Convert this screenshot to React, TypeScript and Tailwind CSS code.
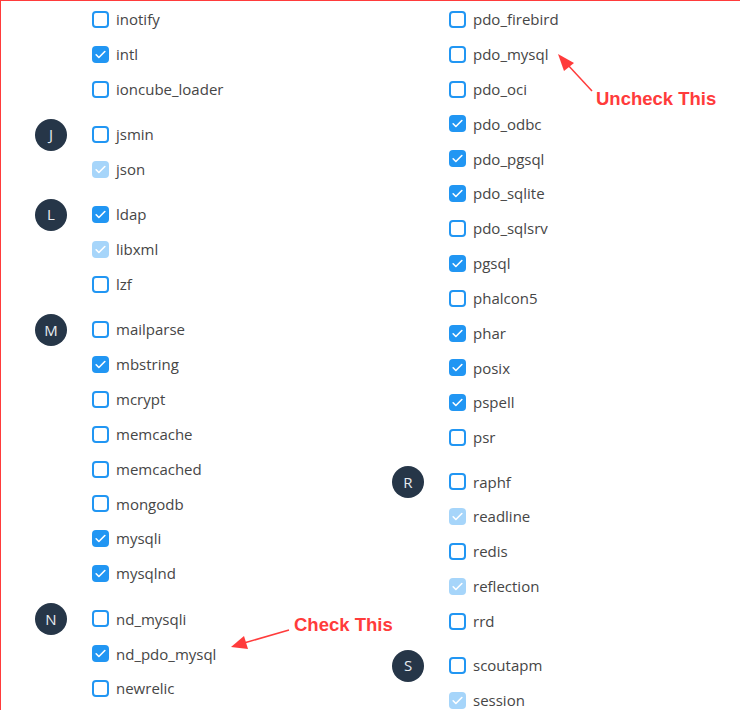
import React from "react";

type Ext = { name: string; state?: "on" | "off" | "locked" };
type Group = { letter?: string; items: Ext[] };

const left: Group[] = [
  {
    items: [
      { name: "inotify" },
      { name: "intl", state: "on" },
      { name: "ioncube_loader" },
    ],
  },
  { letter: "J", items: [{ name: "jsmin" }, { name: "json", state: "locked" }] },
  {
    letter: "L",
    items: [{ name: "ldap", state: "on" }, { name: "libxml", state: "locked" }, { name: "lzf" }],
  },
  {
    letter: "M",
    items: [
      { name: "mailparse" },
      { name: "mbstring", state: "on" },
      { name: "mcrypt" },
      { name: "memcache" },
      { name: "memcached" },
      { name: "mongodb" },
      { name: "mysqli", state: "on" },
      { name: "mysqlnd", state: "on" },
    ],
  },
  {
    letter: "N",
    items: [{ name: "nd_mysqli" }, { name: "nd_pdo_mysql", state: "on" }, { name: "newrelic" }],
  },
];

const right: Group[] = [
  {
    items: [
      { name: "pdo_firebird" },
      { name: "pdo_mysql" },
      { name: "pdo_oci" },
      { name: "pdo_odbc", state: "on" },
      { name: "pdo_pgsql", state: "on" },
      { name: "pdo_sqlite", state: "on" },
      { name: "pdo_sqlsrv" },
      { name: "pgsql", state: "on" },
      { name: "phalcon5" },
      { name: "phar", state: "on" },
      { name: "posix", state: "on" },
      { name: "pspell", state: "on" },
      { name: "psr" },
    ],
  },
  {
    letter: "R",
    items: [
      { name: "raphf" },
      { name: "readline", state: "locked" },
      { name: "redis" },
      { name: "reflection", state: "locked" },
      { name: "rrd" },
    ],
  },
  { letter: "S", items: [{ name: "scoutapm" }, { name: "session", state: "locked" }] },
];

function Box({ state = "off" }: { state?: Ext["state"] }) {
  if (state === "off") {
    return <span className="block w-[17px] h-[17px] rounded-[4px] border-2 border-[#2196f3] bg-white" />;
  }
  return (
    <span
      className={`flex items-center justify-center w-[17px] h-[17px] rounded-[4px] ${
        state === "on" ? "bg-[#2196f3]" : "bg-[#a6d5fa]"
      }`}
    >
      <svg width="13" height="13" viewBox="0 0 24 24" fill="none" stroke="white" strokeWidth="3" strokeLinecap="round" strokeLinejoin="round">
        <path d="M4 12.5l5 5L20 6.5" />
      </svg>
    </span>
  );
}

function Column({ groups, className }: { groups: Group[]; className: string }) {
  return (
    <div className={`shrink-0 flex flex-col ${className}`}>
      {groups.map((g, i) => (
        <div key={i} className="flex">
          <div className="w-[57px] shrink-0 pt-[1.5px]">
            {g.letter && (
              <div className="w-[32px] h-[32px] rounded-full bg-[#263648] text-[#e8ecf0] text-[15px] flex items-center justify-center">
                {g.letter}
              </div>
            )}
          </div>
          <ul className="flex flex-col">
            {g.items.map((it) => (
              <li key={it.name} className="h-[34.85px] flex items-center gap-[7px]">
                <Box state={it.state} />
                <span className="text-[15px] text-[#464646]">{it.name}</span>
              </li>
            ))}
          </ul>
        </div>
      ))}
    </div>
  );
}

export default function App() {
  return (
    <div
      className="relative w-[740px] h-[710px] overflow-hidden bg-white border-l border-t border-[#ff3b3b]"
      style={{ fontFamily: '"Open Sans", "Noto Sans", sans-serif' }}
    >
      <div className="flex pl-[34px] pt-[1px]">
        <Column groups={left} className="w-[357px] gap-[10.5px]" />
        <Column groups={right} className="w-[340px] gap-[9.5px]" />
      </div>

      {/* annotation arrows */}
      <svg className="absolute left-0 top-0 pointer-events-none" width="740" height="710">
        <line x1="591" y1="90" x2="566" y2="63" stroke="#ff3b3b" strokeWidth="1.5" />
        <polygon points="557,53 573,62 563,70" fill="#ff3b3b" />
        <line x1="288" y1="629" x2="243" y2="642" stroke="#ff3b3b" strokeWidth="1.5" />
        <polygon points="230,646 243,635 247,648" fill="#ff3b3b" />
      </svg>
      <div
        className="absolute left-[595px] top-[86px] text-[18.5px] font-bold text-[#ff3b3b] leading-[24px]"
        style={{ fontFamily: '"Liberation Sans", Arial, sans-serif' }}
      >
        Uncheck This
      </div>
      <div
        className="absolute left-[293px] top-[612px] text-[18.5px] font-bold text-[#ff3b3b] leading-[24px]"
        style={{ fontFamily: '"Liberation Sans", Arial, sans-serif' }}
      >
        Check This
      </div>
    </div>
  );
}
